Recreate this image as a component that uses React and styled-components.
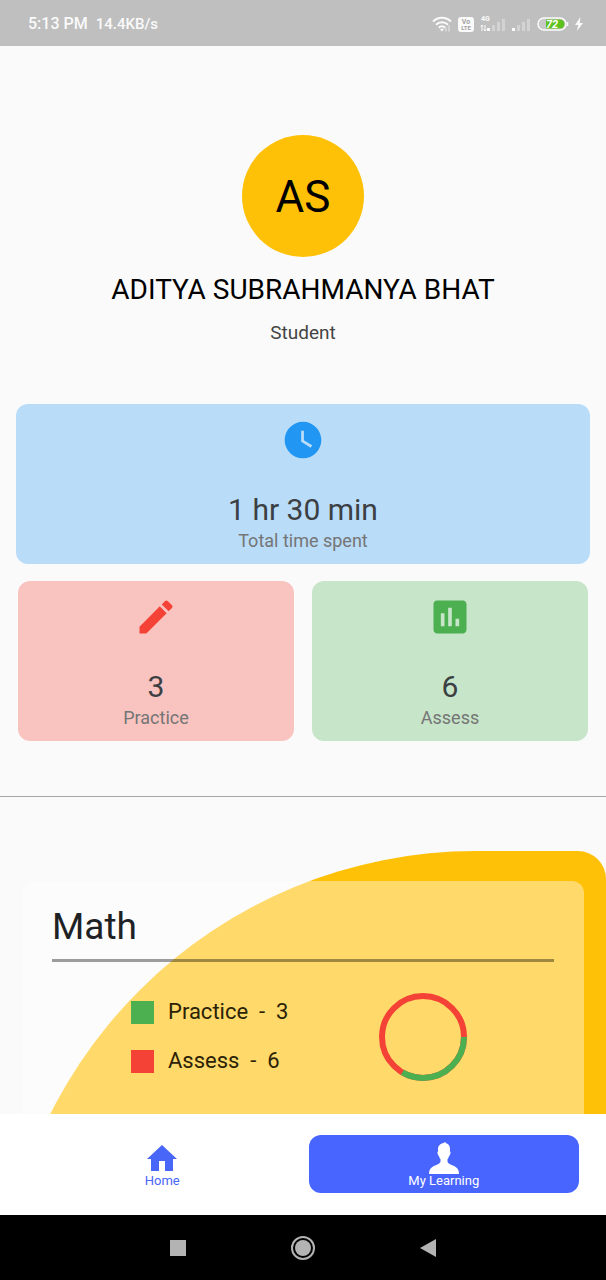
import React from "react";
import styled, { createGlobalStyle } from "styled-components";
import { MdWatchLater, MdEdit, MdAssessment } from "react-icons/md";

const GlobalStyle = createGlobalStyle`
  *, *::before, *::after { box-sizing: border-box; }
  body { margin: 0; background: #fafafa; }
  h1, h2, p, ul { margin: 0; padding: 0; font-weight: 400; }
  button { font: inherit; border: 0; padding: 0; background: none; cursor: pointer; }
`;

const Screen = styled.div`
  height: 100vh;
  display: flex;
  flex-direction: column;
  background: #fafafa;
  color: #202124;
  font-family: Roboto, "Liberation Sans", sans-serif;
`;

const StatusBar = styled.header`
  flex: none;
  height: 46px;
  padding: 2px 23px 0 28px;
  display: flex;
  align-items: center;
  justify-content: space-between;
  background: #bfbfbf;
  color: #fafafa;
`;

const StatusTexts = styled.div`
  display: flex;
  gap: 8px;
  font-size: 16px;
  line-height: 20px;
  font-weight: 500;
`;

const Speed = styled.span`
  font-size: 15px;
`;

const StatusIcons = styled.div`
  display: flex;
  align-items: center;
  gap: 6px;
  svg { display: block; }
`;

const Content = styled.main`
  flex: 1;
  min-height: 0;
  overflow-y: auto;
  scrollbar-width: none;
`;

const Profile = styled.section`
  padding: 89px 16px 0;
  display: flex;
  flex-direction: column;
  align-items: center;
`;

const Avatar = styled.div`
  width: 122px;
  height: 122px;
  padding-top: 2px;
  border-radius: 50%;
  display: flex;
  align-items: center;
  justify-content: center;
  background: #ffc107;
  color: #000;
  font-size: 44px;
  line-height: 52px;
`;

const Name = styled.h1`
  padding-top: 15px;
  color: #000;
  font-size: 28px;
  line-height: 36px;
`;

const Role = styled.p`
  padding-top: 13px;
  color: #444;
  font-size: 19px;
  line-height: 24px;
`;

const Stats = styled.section`
  padding: 59px 16px 55px;
  display: flex;
  flex-direction: column;
  gap: 17px;
`;

const StatRow = styled.div`
  display: grid;
  grid-template-columns: 1fr 1fr;
  gap: 18px;
  padding: 0 2px;
`;

const StatCard = styled.div`
  height: 160px;
  padding-top: 14px;
  border-radius: 12px;
  display: flex;
  flex-direction: column;
  align-items: center;
  background: ${(p) => p.$bg};
  svg { color: ${(p) => p.$accent}; }
`;

const StatValue = styled.p`
  padding-top: 28px;
  color: #3c4043;
  font-size: 30px;
  line-height: 40px;
`;

const StatLabel = styled.p`
  color: #757575;
  font-size: 18px;
  line-height: 22px;
`;

const Divider = styled.hr`
  margin: 0;
  border: 0;
  height: 1px;
  background: #a6a8a8;
`;

const SubjectWrap = styled.div`
  display: grid;
  > * { grid-area: 1 / 1; }
`;

const SubjectBackdrop = styled.div`
  margin-top: 54px;
  min-height: 520px;
  border-radius: 476px 28px 0 0;
  background: #ffc107;
`;

const SubjectCard = styled.article`
  margin: 84px 22px 30px;
  padding: 20px 30px;
  border-radius: 12px;
  background: rgba(255, 255, 255, 0.4);
`;

const SubjectTitle = styled.h2`
  padding-bottom: 6px;
  border-bottom: 3px solid rgba(0, 0, 0, 0.38);
  color: #202124;
  font-size: 37px;
  line-height: 52px;
`;

const SubjectBody = styled.div`
  padding: 31px 87px 0 79px;
  display: flex;
  justify-content: space-between;
  align-items: flex-start;
`;

const Legend = styled.ul`
  padding-top: 5px;
  list-style: none;
  display: flex;
  flex-direction: column;
  gap: 21px;
`;

const LegendItem = styled.li`
  display: flex;
  align-items: center;
  gap: 14px;
  font-size: 22px;
  line-height: 28px;
  color: #2b2206;
  white-space: pre;
`;

const Swatch = styled.span`
  width: 23px;
  height: 23px;
  background: ${(p) => p.$color};
`;

const BottomNav = styled.nav`
  flex: none;
  height: 101px;
  padding: 21px 27px 22px;
  display: grid;
  grid-template-columns: 1fr 1fr;
  gap: 11px;
  background: #fff;
`;

const NavButton = styled.button`
  && {
    padding-bottom: 5px;
    border-radius: 12px;
    display: flex;
    flex-direction: column;
    align-items: center;
    justify-content: flex-end;
    font-size: 13px;
    line-height: 14px;
    color: ${(p) => (p.$active ? "#fff" : "#4866f7")};
    background: ${(p) => (p.$active ? "#4965ff" : "transparent")};
  }
`;

const SystemNav = styled.nav`
  flex: none;
  height: 65px;
  padding: 0 115px;
  display: grid;
  grid-template-columns: repeat(3, 1fr);
  align-items: center;
  justify-items: center;
  background: #000;
  svg { display: block; }
`;

const WifiIcon = () => (
  <svg width="20" height="16" viewBox="0 0 20 16" fill="none" stroke="#fafafa" strokeWidth="2">
    <path d="M1 5.600C6 .4 14 .4 19 5.600" />
    <path d="M4 8.800c3.400-3.500 8.600-3.500 12 0" />
    <path d="M6.800 11.700c1.800-1.900 4.600-1.900 6.400 0" />
    <path d="M8 13.400l2 2 2-2a3 3 0 0 0-4 0z" fill="#fafafa" stroke="none" />
    <path d="M14 15.500v-4M17 15.500v-6" stroke="#dcdcdc" strokeWidth="1.500" />
  </svg>
);

const VolteIcon = () => (
  <svg width="16" height="15" viewBox="0 0 16 15" fontWeight="700" textAnchor="middle" fill="#a4a4a4">
    <rect width="16" height="15" rx="3" fill="#fafafa" />
    <text x="8" y="7" fontSize="7">Vo</text>
    <text x="8" y="13" fontSize="6">LTE</text>
  </svg>
);

const Bars = ({ x, on }) =>
  [3, 6, 9, 12].map((h, i) => (
    <rect key={h} x={x + i * 5} y={16 - h} width="3" height={h} fill={i < on ? "#fafafa" : "#d3d3d3"} />
  ));

const Signal4G = () => (
  <svg width="26" height="18" viewBox="0 0 26 18">
    <text x="1" y="6" fontSize="7" fontWeight="700" fill="#fafafa">4G</text>
    <path d="M2 10v6M5 10v6M.8 11.500L2 10l1.200 1.500M3.800 14.500L5 16l1.200-1.500" stroke="#fafafa" fill="none" />
    <Bars x={7} on={1} />
  </svg>
);

const Signal = () => (
  <svg width="19" height="18" viewBox="0 0 19 18">
    <Bars x={0} on={1} />
  </svg>
);

const Battery = () => (
  <svg width="32" height="14" viewBox="0 0 32 14">
    <rect x="1" y="1" width="28" height="12" rx="6" fill="#c8c8c8" stroke="#fafafa" strokeWidth="1.500" />
    <path d="M9 2.500h14a4.500 4.500 0 0 1 0 9H9z" fill="#5fc11e" />
    <path d="M30.500 5v4" stroke="#fafafa" strokeWidth="1.500" />
    <text x="15" y="11" textAnchor="middle" fontSize="11" fontWeight="700" fontStyle="italic" fill="#fff">72</text>
  </svg>
);

const Bolt = () => (
  <svg width="8" height="14" viewBox="0 0 8 14">
    <path d="M5.500 0L0 8h3.200L2 14l6-8H4.700z" fill="#fafafa" />
  </svg>
);

const HomeIcon = () => (
  <svg width="30" height="30" viewBox="0 0 30 30" fill="currentColor">
    <path d="M15 1L30 15H26V27H18V17H12V27H4V15H0z" />
  </svg>
);

const PersonIcon = () => (
  <svg width="30" height="32" viewBox="0 0 30 32" fill="currentColor">
    <path d="M14.500 1c.8-.5 1.500-.8 2.300-.9l-.3 1c3 .4 4.500 2.800 4.500 6v2.400c.8.300.7 2-.1 3.400-.2.600-.5.800-.8.900-.3 1.800-.9 2.700-1.600 3.400v2.600c.7 2.500 4.800 3.300 7.800 4.900 2.500 1.400 3.700 3.500 3.700 7.300H0c0-3.800 1.200-5.900 3.700-7.300 3-1.600 7.100-2.400 7.800-4.900v-2.600c-.7-.7-1.300-1.600-1.600-3.400-.3-.1-.6-.3-.8-.9-.8-1.400-.9-3.100-.1-3.400V7.100C9 3.600 11.500 1.600 14.500 1z" />
  </svg>
);

const RingChart = () => {
  const r = 41;
  const length = 2 * Math.PI * r;
  return (
    <svg width="88" height="88" viewBox="0 0 88 88" fill="none" strokeWidth="6" role="img" aria-label="Practice 3, Assess 6">
      <circle cx="44" cy="44" r={r} stroke="#f44336" />
      <circle cx="44" cy="44" r={r} stroke="#4caf50" strokeDasharray={`${length / 3} ${length}`} />
    </svg>
  );
};

const legend = [
  { label: "Practice", value: 3, color: "#4caf50" },
  { label: "Assess", value: 6, color: "#f44336" },
];

function Stat({ icon: Icon, value, label, bg, accent }) {
  return (
    <StatCard $bg={bg} $accent={accent}>
      <Icon size={44} />
      <StatValue>{value}</StatValue>
      <StatLabel>{label}</StatLabel>
    </StatCard>
  );
}

export default function App() {
  return (
    <Screen>
      <GlobalStyle />
      <StatusBar>
        <StatusTexts>
          <span>5:13 PM</span>
          <Speed>14.4KB/s</Speed>
        </StatusTexts>
        <StatusIcons>
          <WifiIcon />
          <VolteIcon />
          <Signal4G />
          <Signal />
          <Battery />
          <Bolt />
        </StatusIcons>
      </StatusBar>

      <Content>
        <Profile>
          <Avatar>AS</Avatar>
          <Name>ADITYA SUBRAHMANYA BHAT</Name>
          <Role>Student</Role>
        </Profile>

        <Stats>
          <Stat icon={MdWatchLater} value="1 hr 30 min" label="Total time spent" bg="#b9dcf8" accent="#2196f3" />
          <StatRow>
            <Stat icon={MdEdit} value="3" label="Practice" bg="#f9c4c0" accent="#f44336" />
            <Stat icon={MdAssessment} value="6" label="Assess" bg="#c7e5c9" accent="#4caf50" />
          </StatRow>
        </Stats>

        <Divider />

        <SubjectWrap>
          <SubjectBackdrop />
          <SubjectCard>
            <SubjectTitle>Math</SubjectTitle>
            <SubjectBody>
              <Legend>
                {legend.map((item) => (
                  <LegendItem key={item.label}>
                    <Swatch $color={item.color} />
                    <span>{`${item.label}  -  ${item.value}`}</span>
                  </LegendItem>
                ))}
              </Legend>
              <RingChart />
            </SubjectBody>
          </SubjectCard>
        </SubjectWrap>
      </Content>

      <BottomNav>
        <NavButton type="button">
          <HomeIcon />
          Home
        </NavButton>
        <NavButton type="button" $active aria-current="page">
          <PersonIcon />
          My Learning
        </NavButton>
      </BottomNav>

      <SystemNav aria-label="System">
        <button type="button" aria-label="Recent apps">
          <svg width="16" height="16"><rect width="16" height="16" fill="#b3b3b3" /></svg>
        </button>
        <button type="button" aria-label="Home screen">
          <svg width="24" height="24" viewBox="0 0 24 24">
            <circle cx="12" cy="12" r="11" fill="none" stroke="#b3b3b3" strokeWidth="2" />
            <circle cx="12" cy="12" r="8" fill="#b3b3b3" />
          </svg>
        </button>
        <button type="button" aria-label="Back">
          <svg width="16" height="18"><path d="M16 0v18L0 9z" fill="#b3b3b3" /></svg>
        </button>
      </SystemNav>
    </Screen>
  );
}
